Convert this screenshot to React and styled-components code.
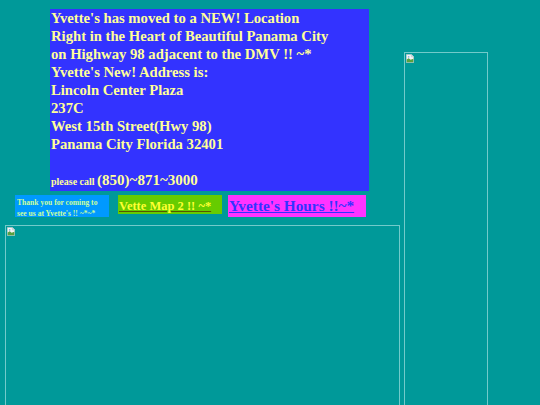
import React from 'react';
import styled, { createGlobalStyle } from 'styled-components';

const Global = createGlobalStyle`
  html, body {
    margin: 0;
    background: #009999;
    font-family: "Liberation Serif", "Times New Roman", serif;
    overflow: hidden;
  }
`;

const Page = styled.div`
  display: flex;
  align-items: flex-start;
  width: 540px;
  height: 405px;
  overflow: hidden;
`;

const LeftCol = styled.div`
  display: flex;
  flex-direction: column;
  width: 400px;
`;

const Notice = styled.div`
  margin: 9px 0 0 50px;
  width: 318px;
  padding: 0 0 0 1px;
  background: #3333ff;
  color: #ffff99;
  font-weight: bold;
  font-size: 14.67px;
  line-height: 18px;
`;

const Line = styled.div`
  min-height: 18px;
`;

const Small = styled.span`
  font-size: 10px;
`;

const Big = styled.span`
  font-size: 15px;
`;

const LinkRow = styled.div`
  display: flex;
  align-items: flex-start;
  margin-top: 4px;
`;

const Tag = styled.div`
  background: ${p => p.bg};
  margin-left: ${p => p.left}px;
  width: ${p => p.w}px;
  height: ${p => p.h}px;
  box-sizing: border-box;
  padding: ${p => p.pad || '1px 0 0 1px'};
  font-weight: bold;
  white-space: nowrap;
`;

const Thanks = styled.div`
  color: #ccff99;
  font-size: 7.6px;
  line-height: 11px;
`;

const TagLink = styled.a`
  color: ${p => p.color};
  font-size: ${p => p.size}px;
  line-height: ${p => p.size + 3}px;
  text-decoration: underline;
  text-decoration-color: ${p => p.line};
`;

const Broken = styled.div`
  box-sizing: border-box;
  border: 1px solid rgba(190, 235, 235, 0.6);
  width: ${p => p.w}px;
  height: ${p => p.h}px;
  margin: ${p => p.m};
  padding: 1px;
  flex-shrink: 0;
  line-height: 0;
`;

const BrokenIcon = () => (
  <svg width="8" height="9" viewBox="0 0 12 13">
    <path d="M0.5 0.5 H8 L11.5 4 V12.5 H0.5 Z" fill="#f4f4f4" stroke="#b8c8c8" />
    <path d="M8 0.5 V4 H11.5" fill="#dde" stroke="#b8c8c8" />
    <path d="M1 12 V8 L4 6 L7 8.5 L11 7 V12 Z" fill="#58a040" />
    <circle cx="4" cy="4" r="1.3" fill="#7fb0e0" />
  </svg>
);

const App = () => {
  return (
    <Page>
      <Global />
      <LeftCol>
        <Notice>
          <Line>Yvette's has moved to a NEW! Location</Line>
          <Line>Right in the Heart of Beautiful Panama City</Line>
          <Line>on Highway 98 adjacent to the DMV !! ~*</Line>
          <Line>Yvette's New! Address is:</Line>
          <Line>Lincoln Center Plaza</Line>
          <Line>237C</Line>
          <Line>West 15th Street(Hwy 98)</Line>
          <Line>Panama City Florida 32401</Line>
          <Line />
          <Line><Small>please call </Small><Big>(850)~871~3000</Big></Line>
        </Notice>
        <LinkRow>
          <Tag bg="#0099ff" left={15} w={94} h={22} pad="2px 0 0 2px">
            <Thanks>Thank you for coming to<br />see us at Yvette's !! ~*~*</Thanks>
          </Tag>
          <Tag bg="#66cc00" left={9} w={104} h={19}>
            <TagLink href="#" color="#ffff33" line="#555500" size={12.5}>Vette Map 2 !! ~*</TagLink>
          </Tag>
          <Tag bg="#ff33ff" left={6} w={138} h={22} pad="2px 0 0 1px">
            <TagLink href="#" color="#3333ff" line="#3333ff" size={15.3}>Yvette's Hours !!~*</TagLink>
          </Tag>
        </LinkRow>
        <Broken w={395} h={200} m="8px 0 0 5px"><BrokenIcon /></Broken>
      </LeftCol>
      <Broken w={84} h={380} m="52px 0 0 4px"><BrokenIcon /></Broken>
    </Page>
  );
};

export default App;
